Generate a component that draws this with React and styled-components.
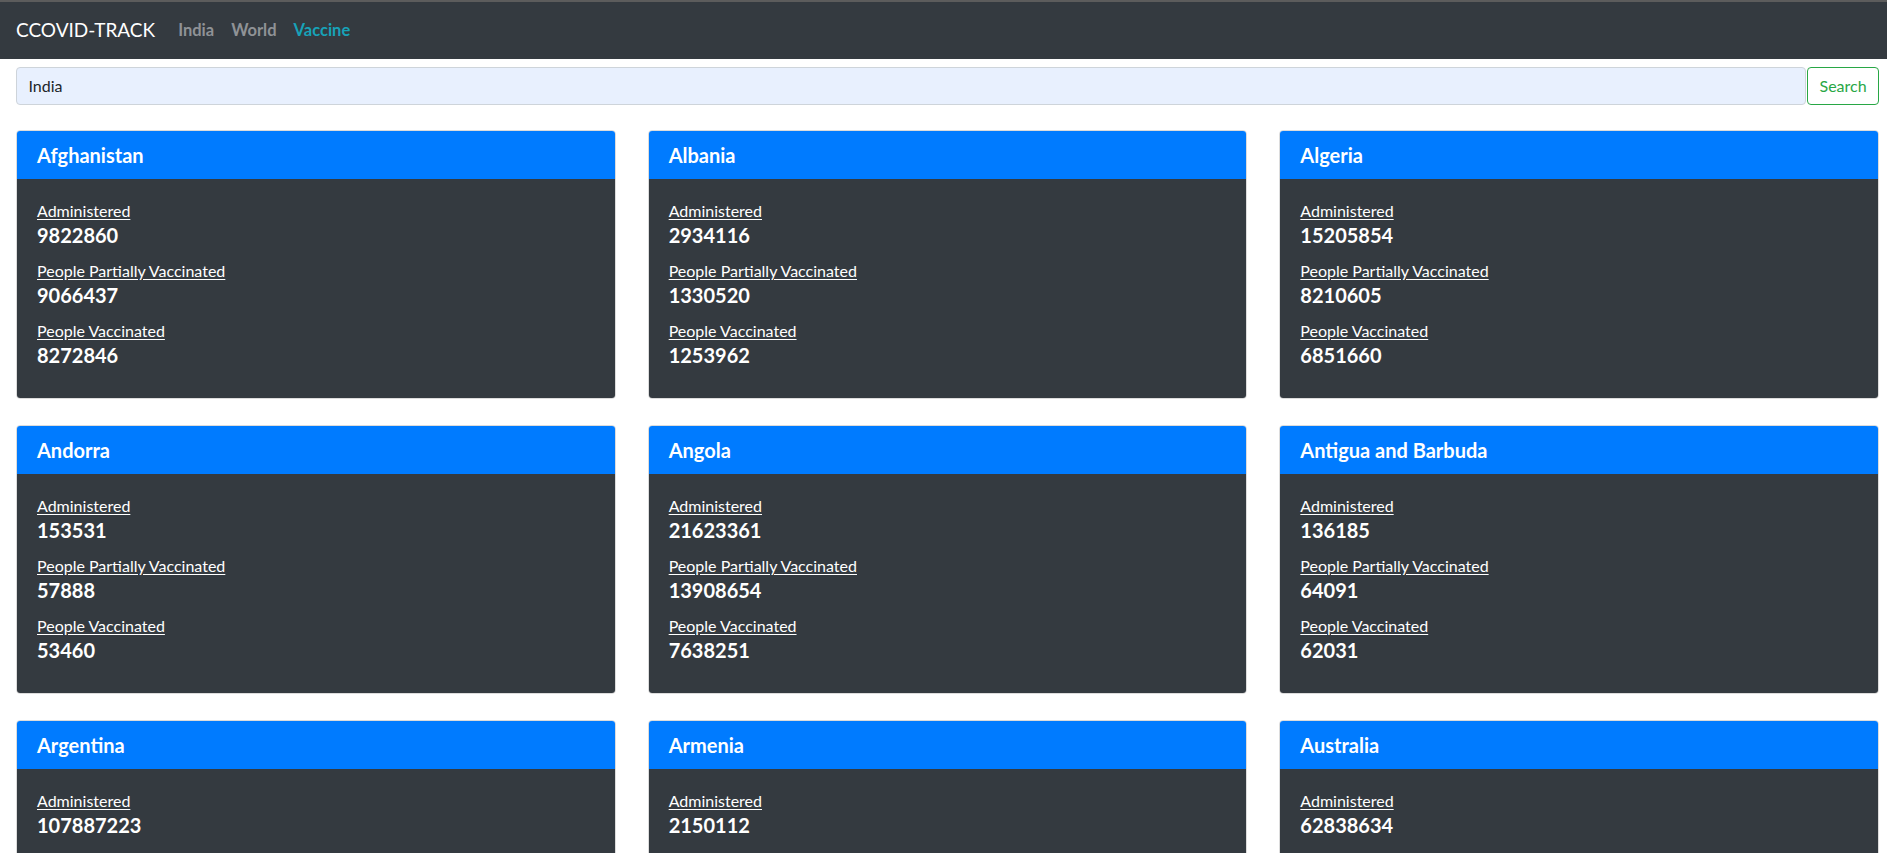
import React from "react";
import styled, { createGlobalStyle } from "styled-components";

const GlobalStyle = createGlobalStyle`
  html, body {
    margin: 0;
    padding: 0;
    background: #ffffff;
    font-family: "Lato", "Noto Sans", "Liberation Sans", sans-serif;
  }
  * { box-sizing: border-box; }
`;

const Navbar = styled.nav`
  display: flex;
  align-items: center;
  height: 58.5px;
  background: #343a40;
  border-top: 2px solid #5c5c5c;
  padding: 0 16px;
`;

const Brand = styled.a`
  font-size: 19px;
  line-height: 30px;
  color: #ffffff;
  margin-right: 23px;
  text-decoration: none;
`;

const NavLink = styled.a`
  font-size: 16.5px;
  font-weight: 700;
  line-height: 24px;
  color: ${(p) => (p.$active ? "#17a2b8" : "#8f9296")};
  margin-right: 17px;
  text-decoration: none;
`;

const Main = styled.main`
  padding: 8.5px 8px 24px 15.5px;
`;

const SearchForm = styled.form`
  display: flex;
  align-items: stretch;
  gap: 1px;
`;

const SearchInput = styled.input`
  flex: 1;
  height: 37.5px;
  background: #e8f0fe;
  border: 1px solid #ced4da;
  border-radius: 4px;
  padding: 6px 12px;
  font-family: inherit;
  font-size: 16px;
  color: #212529;
  outline: none;
`;

const SearchButton = styled.button`
  width: 72.5px;
  height: 37.5px;
  background: #ffffff;
  border: 1px solid #28a745;
  border-radius: 4px;
  color: #28a745;
  font-family: inherit;
  font-size: 16px;
  padding: 6px 12px;
`;

const Grid = styled.div`
  display: grid;
  grid-template-columns: repeat(3, 1fr);
  column-gap: 32px;
  row-gap: 26px;
  margin-top: 25.5px;
  padding-left: 0.5px;
`;

const Card = styled.section`
  border: 1px solid #dcdcdc;
  border-radius: 4px;
  overflow: hidden;
  background: #ffffff;
`;

const CardHeader = styled.header`
  background: #007bff;
  padding: 12px 20px;
`;

const CardTitle = styled.h5`
  margin: 0;
  font-size: 20px;
  line-height: 24px;
  font-weight: 700;
  color: #ffffff;
`;

const CardBody = styled.div`
  background: #343a40;
  padding: 20px 20px 19px;
  color: #ffffff;
`;

const StatLabel = styled.div`
  font-size: 16px;
  line-height: 24px;
  text-decoration: underline;
  text-underline-offset: 2px;
`;

const StatValue = styled.div`
  font-size: 20px;
  line-height: 24px;
  font-weight: 700;
  margin-bottom: 12px;
`;

const countries = [
  ["Afghanistan", "9822860", "9066437", "8272846"],
  ["Albania", "2934116", "1330520", "1253962"],
  ["Algeria", "15205854", "8210605", "6851660"],
  ["Andorra", "153531", "57888", "53460"],
  ["Angola", "21623361", "13908654", "7638251"],
  ["Antigua and Barbuda", "136185", "64091", "62031"],
  ["Argentina", "107887223", "41211538", "37856781"],
  ["Armenia", "2150112", "1096584", "942154"],
  ["Australia", "62838634", "22225435", "21293187"],
];

export default function App() {
  return (
    <>
      <GlobalStyle />
      <Navbar>
        <Brand href="#">CCOVID-TRACK</Brand>
        <NavLink href="#">India</NavLink>
        <NavLink href="#">World</NavLink>
        <NavLink href="#" $active>
          Vaccine
        </NavLink>
      </Navbar>
      <Main>
        <SearchForm onSubmit={(e) => e.preventDefault()}>
          <SearchInput defaultValue="India" />
          <SearchButton type="submit">Search</SearchButton>
        </SearchForm>
        <Grid>
          {countries.map(([name, adm, partial, full]) => (
            <Card key={name}>
              <CardHeader>
                <CardTitle>{name}</CardTitle>
              </CardHeader>
              <CardBody>
                <StatLabel>Administered</StatLabel>
                <StatValue>{adm}</StatValue>
                <StatLabel>People Partially Vaccinated</StatLabel>
                <StatValue>{partial}</StatValue>
                <StatLabel>People Vaccinated</StatLabel>
                <StatValue>{full}</StatValue>
              </CardBody>
            </Card>
          ))}
        </Grid>
      </Main>
    </>
  );
}
